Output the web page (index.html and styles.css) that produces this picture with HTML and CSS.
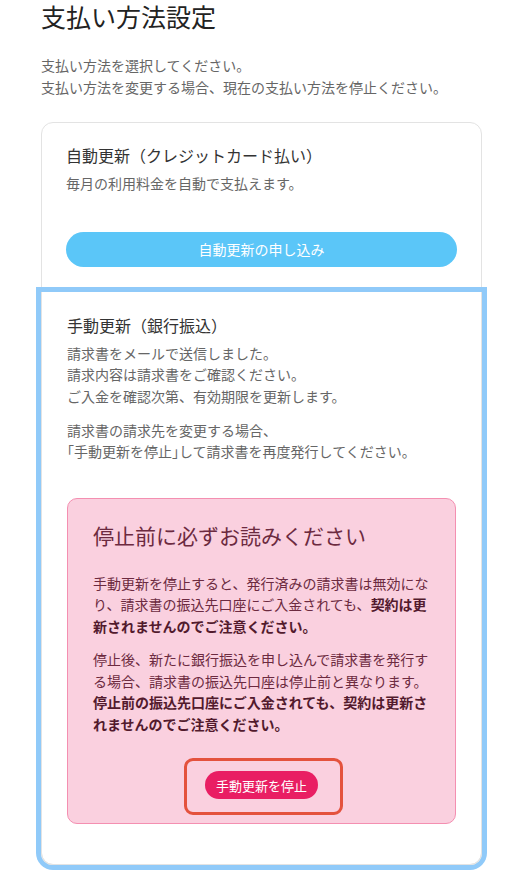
FILE: index.html
```html
<!DOCTYPE html>
<html lang="ja">

<head>
  <meta charset="UTF-8">
  <meta name="viewport" content="width=device-width, initial-scale=1.0">
  <title>支払い方法設定</title>
  <link rel="stylesheet" href="styles.css">
</head>

<body>

  <div class="page">

    <h1 class="page-title">支払い方法設定</h1>

    <p class="lead">
      支払い方法を選択してください。<br>
      支払い方法を変更する場合、現在の支払い方法を停止ください。
    </p>

    <div class="card">

      <div class="method">
        <h2 class="method-title">自動更新（クレジットカード払い）</h2>
        <p class="method-text">毎月の利用料金を自動で支払えます。</p>
        <button class="btn-apply">自動更新の申し込み</button>
      </div>

      <div class="method active">
        <h2 class="method-title">手動更新（銀行振込）</h2>
        <p class="method-text">
          請求書をメールで送信しました。<br>
          請求内容は請求書をご確認ください。<br>
          ご入金を確認次第、有効期限を更新します。
        </p>
        <p class="method-text">
          請求書の請求先を変更する場合、<br>
          <span class="half">「</span>手動更新を停止<span class="half">」</span>して請求書を再度発行してください。
        </p>

        <div class="notice">
          <h3 class="notice-title">停止前に必ずお読みください</h3>
          <p class="notice-text">
            手動更新を停止すると、発行済みの請求書は無効になり、請求書の振込先口座にご入金されても、<b>契約は更新されませんのでご注意ください。</b>
          </p>
          <p class="notice-text">
            停止後、新たに銀行振込を申し込んで請求書を発行する場合、請求書の振込先口座は停止前と異なります。<b>停止前の振込先口座にご入金されても、契約は更新されませんのでご注意ください。</b>
          </p>
          <div class="stop-wrap">
            <button class="btn-stop">手動更新を停止</button>
            <span class="highlight"></span>
          </div>
        </div>
      </div>

    </div>

  </div>

</body>

</html>
```

FILE: styles.css
```css
body {
  font-family: "Noto Sans CJK JP", "Noto Sans", sans-serif;
  background-color: #fff;
  color: #333;
  margin: 0;
}

.page {
  padding: 0 43px 20px 41px;
}

.page-title {
  font-size: 25px;
  font-weight: normal;
  line-height: 32px;
  color: #222;
  margin: 0 0 22px;
}

.lead {
  font-size: 14px;
  line-height: 22px;
  color: #666;
  margin: 0 0 24px;
}

.card {
  border: 1px solid #e3e3e3;
  border-radius: 12px;
}

.method {
  padding: 20px 24px 25px;
}

.method.active {
  margin: 0 -1px -1px;
  padding: 21px 25px 40px;
  border: 1px solid #e3e3e3;
  border-top: none;
  border-radius: 0 0 12px 12px;
  box-shadow: 0 0 0 5px #90caf9;
}

.method-title {
  font-size: 16px;
  font-weight: normal;
  line-height: 24px;
  color: #333;
  margin: 0 0 6px;
}

.method-text {
  font-size: 14px;
  line-height: 21.5px;
  color: #666;
  margin: 0 0 12.5px;
}

.half {
  font-feature-settings: "halt";
}

.btn-apply {
  display: block;
  width: 100%;
  height: 35px;
  margin-top: 37px;
  border: none;
  border-radius: 18px;
  background-color: #5bc6f8;
  color: #fff;
  font-family: inherit;
  font-size: 14px;
  cursor: pointer;
}

.notice {
  margin-top: 35px;
  padding: 21px 25px 24px;
  background-color: #fad0df;
  border: 1px solid #f48fb1;
  border-radius: 10px;
  color: #6c2a40;
}

.notice-title {
  font-size: 21px;
  font-weight: normal;
  line-height: 30px;
  margin: 0 0 23px;
}

.notice-text {
  font-size: 14px;
  line-height: 21.5px;
  margin: 0 0 12px;
}

.notice-text b {
  color: #521a2d;
}

.stop-wrap {
  position: relative;
  display: flex;
  justify-content: center;
  margin-top: 36px;
}

.btn-stop {
  height: 28px;
  padding: 0 11px;
  border: none;
  border-radius: 14px;
  background-color: #e91e63;
  color: #fff;
  font-family: inherit;
  font-size: 13px;
  cursor: pointer;
}

.highlight {
  position: absolute;
  top: -13px;
  left: 50%;
  width: 153px;
  height: 51px;
  margin-left: -78px;
  border: 3px solid #e4523d;
  border-radius: 9px;
}
```
